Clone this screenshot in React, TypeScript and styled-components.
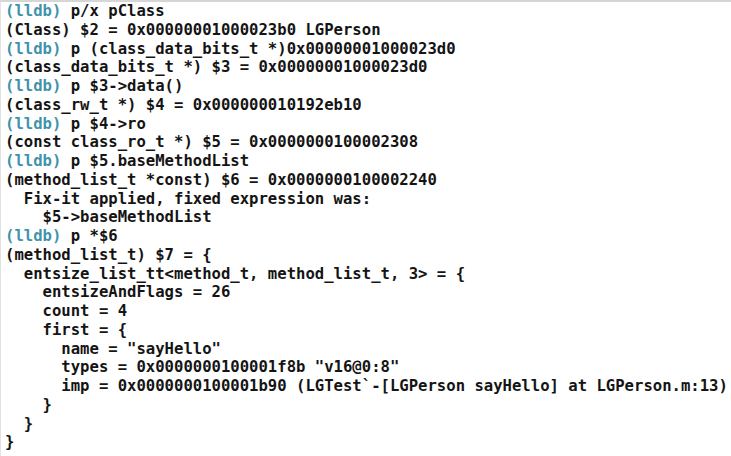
import React from "react";
import styled, { createGlobalStyle } from "styled-components";

const Global = createGlobalStyle`
  html, body { margin: 0; padding: 0; background: #ffffff; }
  body { width: 731px; height: 456px; overflow: hidden; }
`;

const Frame = styled.div`
  width: 731px;
  height: 456px;
  box-sizing: border-box;
  border-top: 2px solid #d6d6d6;
  border-left: 1px solid #e2e2e2;
  background: #ffffff;
  padding: 0 0 0 4px;
  overflow: hidden;
`;

const Console = styled.pre`
  margin: 0;
  font-family: "DejaVu Sans Mono", "Liberation Mono", monospace;
  font-weight: bold;
  font-size: 15.6px;
  line-height: 18.75px;
  color: #141414;
  white-space: pre;
`;

const Prompt = styled.span`
  color: #3f93aa;
`;

type Line = { prompt?: boolean; text: string };

const lines: Line[] = [
  { prompt: true, text: "p/x pClass" },
  { text: "(Class) $2 = 0x00000001000023b0 LGPerson" },
  { prompt: true, text: "p (class_data_bits_t *)0x00000001000023d0" },
  { text: "(class_data_bits_t *) $3 = 0x00000001000023d0" },
  { prompt: true, text: "p $3->data()" },
  { text: "(class_rw_t *) $4 = 0x000000010192eb10" },
  { prompt: true, text: "p $4->ro" },
  { text: "(const class_ro_t *) $5 = 0x0000000100002308" },
  { prompt: true, text: "p $5.baseMethodList" },
  { text: "(method_list_t *const) $6 = 0x0000000100002240" },
  { text: "  Fix-it applied, fixed expression was: " },
  { text: "    $5->baseMethodList" },
  { prompt: true, text: "p *$6" },
  { text: "(method_list_t) $7 = {" },
  { text: "  entsize_list_tt<method_t, method_list_t, 3> = {" },
  { text: "    entsizeAndFlags = 26" },
  { text: "    count = 4" },
  { text: "    first = {" },
  { text: '      name = "sayHello"' },
  { text: '      types = 0x0000000100001f8b "v16@0:8"' },
  { text: "      imp = 0x0000000100001b90 (LGTest`-[LGPerson sayHello] at LGPerson.m:13)" },
  { text: "    }" },
  { text: "  }" },
  { text: "}" },
];

export default function App() {
  return (
    <>
      <Global />
      <Frame>
        <Console>
          {lines.map((l, i) => (
            <React.Fragment key={i}>
              {l.prompt && <Prompt>(lldb) </Prompt>}
              {l.text}
              {"\n"}
            </React.Fragment>
          ))}
        </Console>
      </Frame>
    </>
  );
}
